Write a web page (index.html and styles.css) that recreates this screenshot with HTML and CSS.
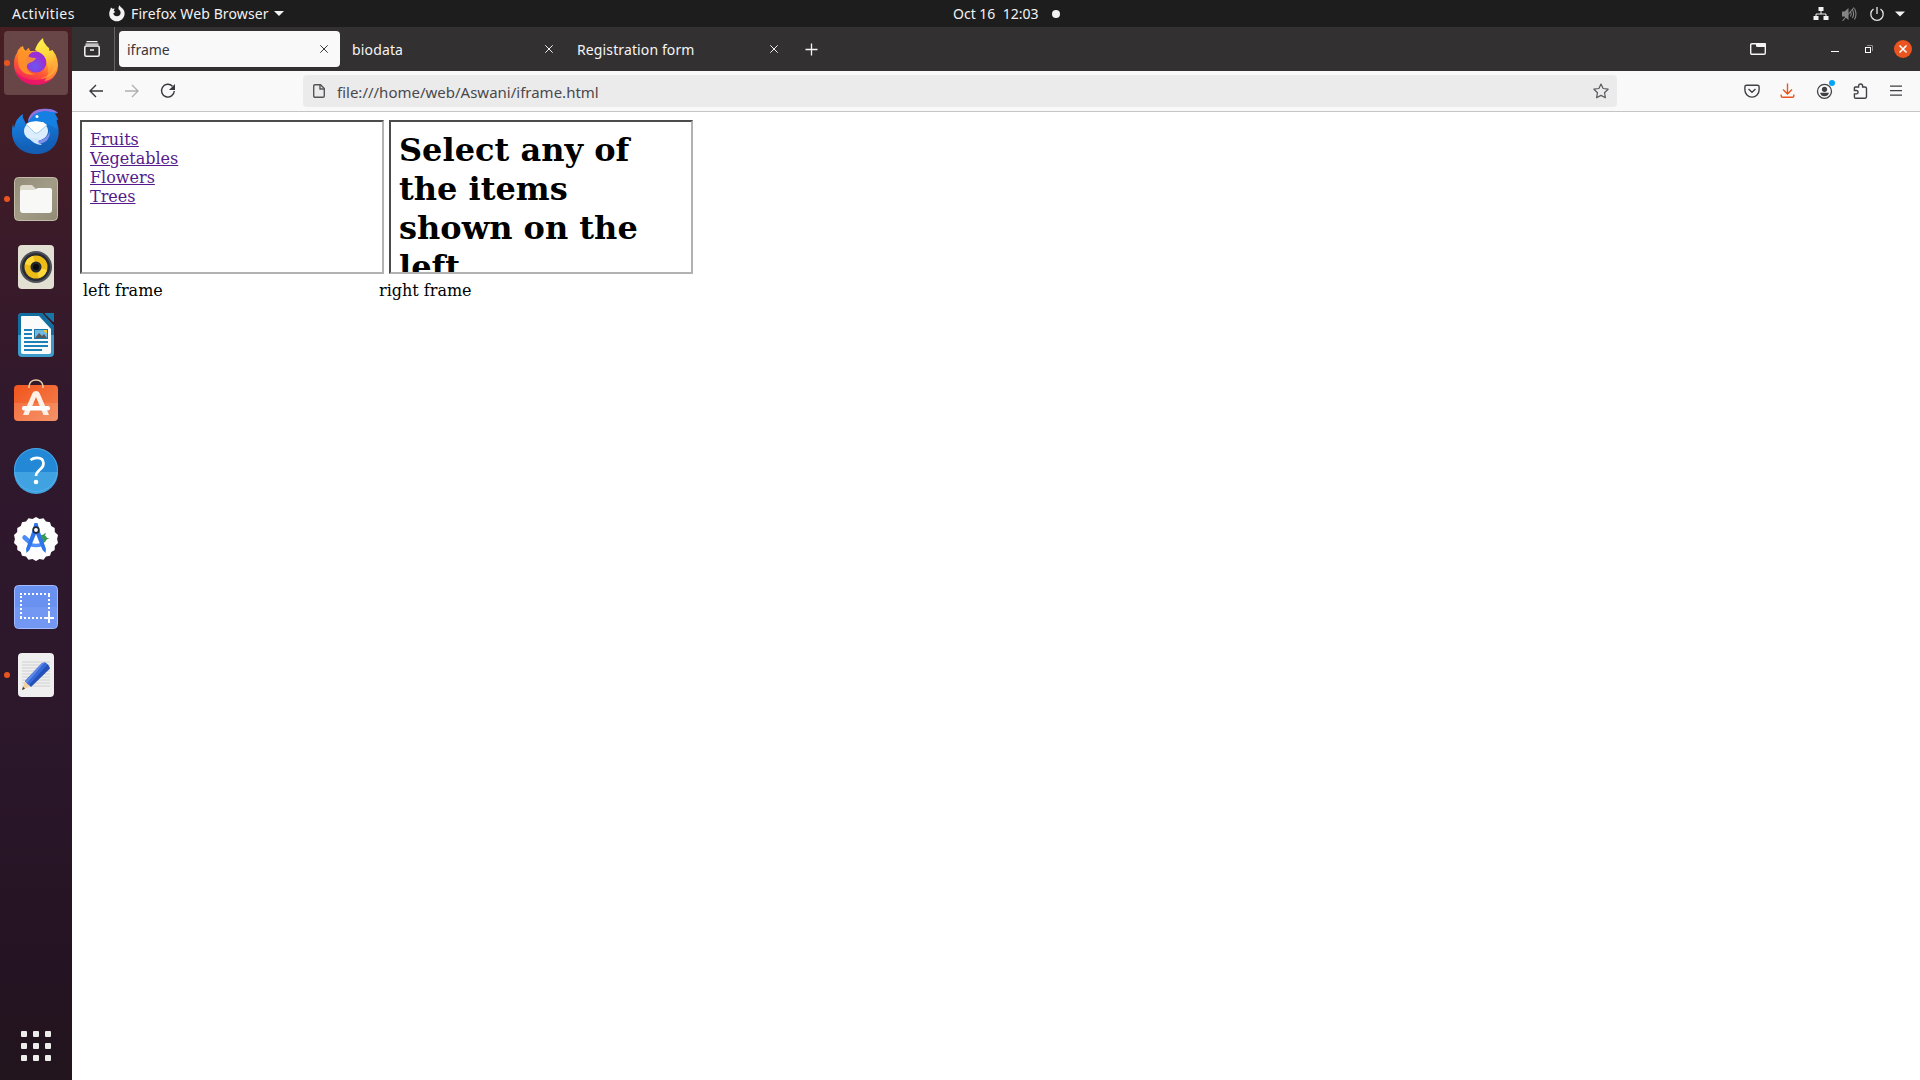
FILE: index.html
```html
<!DOCTYPE html>
<html lang="en">
<head>
<meta charset="utf-8">
<title>iframe</title>
<link rel="stylesheet" href="styles.css">
</head>
<body>
<header class="topbar">
  <div class="top-left">
    <span class="t-activities">Activities</span>
    <svg class="app-icon" width="16" height="17" viewBox="0 0 16 17"><path d="M1.2 4.800 2 2.600l1.600 1.200 2-.2L4.800 6l1.600 1-2.100 1.300c.2 2 1.700 3 3.600 3 2.200 0 3.700-1.500 3.700-3.500 0-1.700-.9-2.600-1.900-3.200C9.300 3 9.500 1.500 10.600.2c.5 1.700 1.700 2 2.900 3.300C15 5 15.800 6.800 15.600 9c-.3 4-3.600 7.300-7.700 7.300S.3 13.200.2 9c0-1.600.3-3 1-4.200Z" fill="#f2f2f2"/></svg>
    <span class="t-app">Firefox Web Browser</span>
    <svg width="10" height="5" viewBox="0 0 10 5"><path d="M0 0h10L5 5z" fill="#f2f2f2"/></svg>
  </div>
  <div class="clock"><span class="t-clock">Oct 16&nbsp; 12:03</span><i class="notify"></i></div>
  <div class="status">
    <svg width="16" height="16" viewBox="0 0 16 16"><path d="M3 10V8h10v2M8 4v4" fill="none" stroke="#f2f2f2"/><path d="M5.500 1h5v4h-5zM.5 10h5v4h-5zM10.500 10h5v4h-5z" fill="#f2f2f2"/></svg>
    <svg width="16" height="16" viewBox="0 0 16 16"><path d="M1 5.500h2.500L7.500 2v12l-4-3.500H1z" fill="#858585"/><path d="M9.500 5.500q1.500 2.500 0 5M11.500 4q2.200 4 0 8M13.500 2.500q3 5.500 0 11M1.500 15 13 1.500" fill="none" stroke="#858585" stroke-width="1.100"/></svg>
    <svg width="16" height="16" viewBox="0 0 16 16"><path d="M4.500 3A6.200 6.200 0 1 0 11.500 3M8 1v7" fill="none" stroke="#e8e8e8" stroke-width="1.300"/></svg>
    <svg width="10" height="6" viewBox="0 0 10 6"><path d="M0 .5h10l-5 5z" fill="#f2f2f2"/></svg>
  </div>
</header>
<div class="desktop">
<nav class="dock">
  <div class="slot focused running"><svg viewBox="0 1 48 48"><defs><linearGradient id="fx" x1=".85" y1="0" x2=".3" y2="1"><stop offset="0" stop-color="#ffd84a"/><stop offset=".35" stop-color="#ffa22e"/><stop offset=".65" stop-color="#ff5634"/><stop offset="1" stop-color="#f01e60"/></linearGradient><radialGradient id="fp" cx=".45" cy=".7"><stop offset="0" stop-color="#6b58f2"/><stop offset="1" stop-color="#9a2fd4"/></radialGradient><linearGradient id="fy" x1="0" y1="0" x2=".2" y2="1"><stop offset="0" stop-color="#fff450"/><stop offset=".45" stop-color="#ffd83c"/><stop offset="1" stop-color="#ff8034"/></linearGradient></defs><path d="M5 15q0-3 3-5l3-2q0 3 3 5 2-3 3-3 0 2 1 3h19q6 4 8 11c2 13-7 22.500-21 22.500C11 46.500 2 38 2 26q0-7 3-11Z" fill="url(#fx)"/><path d="M3.500 33q7 9 20.500 9 14 0 21-11-4 16-21 16Q8.500 47 3.500 33Z" fill="#e80f6d" opacity=".75"/><circle cx="24" cy="24" r="10.500" fill="url(#fp)"/><path d="M23 12q2-7 8-12 0 5 6 10l.5 3 3-1q7 9 5 20-3 10-13 11 6-8 2.500-17-1-7-5-10-3-2-7-4Z" fill="url(#fy)"/><path d="M42 17q3 20-15 24 14-1 18-11 1-7-3-13Z" fill="#ffb03a" opacity=".6"/><path d="M9 8q0 4 4 6 2-3 4-4 0 3 2 5-3 2-2 4 4 1 7 1-1 3-7 5-3 2-2 6 3 5 9 5-12 3-17-7Q4 18 9 8Z" fill="#ff9228" opacity=".9"/></svg></div>
  <div class="slot"><svg viewBox="0 -1 48 48"><defs><linearGradient id="tb" x1=".3" y1="0" x2=".5" y2="1"><stop offset="0" stop-color="#1b8af0"/><stop offset="1" stop-color="#1058ac"/></linearGradient></defs><path d="M16 14C17 5 24 1 32 1q8-1 14 4l-4 1q4 3 4 6-1 0-2 0c6 12 3 34-20 34C9 46 0 36 0 24q0-5 1-8l1 4q2-10 9-14-1 3 1 6 3 4 1 7Z" fill="url(#tb)"/><path d="M16 13C18 4 25 0 35 1q7 0 11 4-8-2-14-1-8 3-16 9Z" fill="#9470dc"/><path d="M16 16Q20 4 32 3q8 0 12 4 1 7 1 14-10-8-29-5Z" fill="#1680e2"/><ellipse cx="24" cy="23" rx="12" ry="10" fill="#dceefd"/><path d="M17 30q5 7 13 7-4-3-3-7Z" fill="#cfe6fb"/><path d="m14 16 9 9q2 1 4-1l8-7-4-3H18z" fill="#fff"/><path d="m14 16 9 9q2 1 4-1l8-7" fill="none" stroke="#9ccbee"/><path d="M26 33q9-2 12-10 0 11-10 13-2-1-2-3Z" fill="#7f8ee9"/><circle cx="25" cy="8.500" r="1.500" fill="#fff"/><path d="M2 30q7 12 22 11 13 0 20-12-4 17-20 17Q7 45 2 30Z" fill="#155fb5" opacity=".7"/></svg></div>
  <div class="slot running"><svg viewBox="0 0 48 48"><defs><linearGradient id="fl" x2="1" y2="1"><stop stop-color="#918b78"/><stop offset=".5" stop-color="#a29c87"/><stop offset="1" stop-color="#928b76"/></linearGradient></defs><rect x="2.500" y="2.500" width="43" height="43" rx="4" fill="url(#fl)" stroke="#c2bca8"/><path d="M8 13q0-3 3-3h9l4 4h10v8H8z" fill="#dedace"/><path d="M8 17q0-2 2-2h12l4-2h12q2 0 2 2v20q0 3-3 3H11q-3 0-3-3z" fill="#f8f8f6"/></svg></div>
  <div class="slot"><svg viewBox="0 0 48 48"><rect x="6" y="2" width="36" height="44" rx="4" fill="#e2dfd3"/><circle cx="24" cy="24" r="16" fill="#4f5259"/><circle cx="24" cy="24" r="14" fill="#292c32"/><circle cx="24" cy="24" r="11.500" fill="#eebc16"/><path d="M24 24 13 21a11.500 11.500 0 0 1 8-8zM24 24l11 3a11.500 11.500 0 0 1-8 8z" fill="#ffd83b"/><circle cx="24" cy="24" r="5.500" fill="#26282c"/><circle cx="24" cy="24" r="3" fill="#0c0c0e"/></svg></div>
  <div class="slot"><svg viewBox="0 0 48 48"><path d="M10 2h20l12 13v27q0 4-4 4H10q-4 0-4-4V6q0-4 4-4Z" fill="#3c9bcb"/><path d="M10 2h20l12 13v9H6V6q0-4 4-4Z" fill="#126e9f"/><path d="M33 2h9v9q-1 0-2-1l-7-7q-1-1 0-1Z" fill="#1477a8"/><path d="M10 5h17l12 13v23q0 2-2 2H11q-2 0-2-2V6q0-1 1-1Z" fill="#fbfbfb"/><path d="M12 19h8M12 23h8M12 27h8M12 31h24M12 35h24M12 39h18" stroke="#1c81b5" stroke-width="2"/><rect x="22.500" y="18.500" width="13" height="9" fill="#70b9e2" stroke="#1b79aa"/><path d="m23 27 4-5 3 3 2-2 3 4z" fill="#56595a"/><path d="M32 19h3v3q-3 0-3-3Z" fill="#f7c727"/></svg></div>
  <div class="slot"><svg viewBox="0 0 48 48"><defs><linearGradient id="sw" x2="1" y2="1"><stop stop-color="#f1541c"/><stop offset="1" stop-color="#f48553"/></linearGradient></defs><rect x="2" y="6" width="44" height="36" rx="4" fill="url(#sw)"/><path d="M2 24h44v14q0 4-4 4H6q-4 0-4-4z" fill="#fff" opacity=".12"/><path d="M17 9V7q1-6 7-6t7 6v2" fill="none" stroke="#e9cfa6" stroke-width="1.500"/><path d="m11 36 9.500-22q1-2 3.500-2t3.500 2L37 36h-5.500L24 18l-7.500 18z" fill="#fff1e8"/><rect x="10" y="27" width="28" height="4.500" rx="2" fill="#fff"/></svg></div>
  <div class="slot"><svg viewBox="0 1 48 48"><circle cx="24" cy="24" r="22" fill="#2388d6"/><path d="M2 26h44a22 22 0 0 1-44 0Z" fill="#41a2e1"/><circle cx="24" cy="24" r="21.500" fill="none" stroke="#58b3ec" opacity=".7"/><path d="M18.500 14q3-2.200 6.500-2.200 6.500 0 6.500 5.700 0 3.500-4 6.500-3.500 3-3.500 6" fill="none" stroke="#fff" stroke-width="2.700"/><circle cx="24" cy="36" r="2.300" fill="#fff"/></svg></div>
  <div class="slot"><svg viewBox="0 0 48 48"><path d="m24 2 3.500 2 4-.8 2.500 3.300 4 .8 1.200 3.800 3.500 2 .1 4L46 20l-.9 4 .9 4-3.200 2.900-.1 4-3.500 2-1.200 3.800-4 .8-2.500 3.300-4-.8L24 46l-3.500-2-4 .8-2.500-3.300-4-.8-1.200-3.800-3.500-2-.1-4L2 28l.9-4L2 20l3.200-2.900.1-4 3.500-2L10 7.300l4-.8 2.500-3.300 4 .8z" fill="#fff"/><path d="M29 20q4-1 6 3-1 5-5 5z" fill="#3a9b55"/><path d="m31 21 2.500-2.500M33 24l3.500-.5" stroke="#30894a" stroke-width="1.200"/><path d="m12.500 22.500 5 4.500" stroke="#4b8cf8" stroke-width="4.500" stroke-linecap="round"/><path d="M18 29.500q6 2 12 0" fill="none" stroke="#4f90fb" stroke-width="3.500"/><path d="M22.500 8h3l2.500 9 6 17-.5 4-3-3L24 19l-6.500 16-3 3-.5-4 6-17z" fill="#2f75e9"/><circle cx="24" cy="15" r="2.800" fill="#fff" stroke="#202735" stroke-width="1.700"/></svg></div>
  <div class="slot"><svg viewBox="0 0 48 48"><rect x="2.500" y="2.500" width="43" height="43" rx="4" fill="#6891f0" stroke="#a3bcff"/><path d="M3 24h42v17q0 4-4 4H7q-4 0-4-4z" fill="#789bf5" opacity=".7"/><path d="M8 11h30M37 12v20M9 13v24M8 35h26" fill="none" stroke="#fff" stroke-width="2" stroke-dasharray="2 2"/><path d="M37 30v10M32 35h10" stroke="#fff" stroke-width="2"/></svg></div>
  <div class="slot running"><svg viewBox="0 0 48 48"><rect x="6" y="2" width="36" height="44" rx="4" fill="#efefef"/><path d="M10 11h28M10 14h28M10 17h28M10 20h28M10 23h28M10 26h28M10 29h28M10 32h28M10 35h28" stroke="#c9c9c9" stroke-width=".8"/><path d="m10 39 3-9 5 5.500z" fill="#f2d1a1"/><path d="m10 39 1-3.200 2 2z" fill="#333"/><path d="m13 30 17-18 3-.5q4 2 5 6L19 36z" fill="#2450b8"/><path d="m13 30 17-18 3-.5L15 32.500z" fill="#5c88e8"/><path d="m15 32.500 18-21 2.500 2L17 34z" fill="#376bd9"/></svg></div>
  <div class="slot apps"><svg viewBox="0 0 48 48"><g fill="#ededeb"><rect x="9" y="9" width="6" height="6" rx="1"/><rect x="21" y="9" width="6" height="6" rx="1"/><rect x="33" y="9" width="6" height="6" rx="1"/><rect x="9" y="21" width="6" height="6" rx="1"/><rect x="21" y="21" width="6" height="6" rx="1"/><rect x="33" y="21" width="6" height="6" rx="1"/><rect x="9" y="33" width="6" height="6" rx="1"/><rect x="21" y="33" width="6" height="6" rx="1"/><rect x="33" y="33" width="6" height="6" rx="1"/></g></svg></div>
</nav>
<main class="browser">
  <div class="tabbar">
    <div class="recent"><svg width="16" height="16" viewBox="0 0 16 16"><path d="M2.500.7h11M1.500 3.200h13" stroke="#f5f5f5" stroke-width="1.200" fill="none"/><rect x=".8" y="5" width="14.400" height="10.200" rx="1.500" fill="none" stroke="#f5f5f5" stroke-width="1.500"/><path d="M6 9h4" stroke="#f5f5f5" stroke-width="1.500"/></svg></div>
    <div class="tab active"><span>iframe</span><svg width="8" height="8" viewBox="0 0 8 8"><path d="m.3.300 7.400 7.400m0-7.400L.3 7.700"/></svg></div>
    <div class="tab"><span class="t-tab2">biodata</span><svg width="8" height="8" viewBox="0 0 8 8"><path d="m.3.300 7.400 7.400m0-7.400L.3 7.700"/></svg></div>
    <div class="tab"><span class="t-tab3">Registration form</span><svg width="8" height="8" viewBox="0 0 8 8"><path d="m.3.300 7.400 7.400m0-7.400L.3 7.700"/></svg></div>
    <svg class="plus" width="13" height="13" viewBox="0 0 13 13"><path d="M6.500.5v12M.5 6.500h12" stroke="#f5f5f5" stroke-width="1.300"/></svg>
    <div class="window-buttons">
      <svg width="16" height="12" viewBox="0 0 16 12"><rect x=".7" y=".7" width="14.600" height="10.600" rx="1.200" fill="none" stroke="#f5f5f5" stroke-width="1.400"/><path d="M6 0h9q1 0 1 1v3H7.500Q6 4 6 2.500z" fill="#f5f5f5"/></svg>
      <svg class="min" width="8" height="6" viewBox="0 0 8 6"><path d="M0 5.500h8" stroke="#fff"/></svg>
      <svg class="restore" width="8" height="8" viewBox="0 0 8 8"><path d="M2 .5h5.500V6" fill="none" stroke="#8b898a"/><rect x=".5" y="2.500" width="5" height="5" fill="none" stroke="#fff"/></svg>
      <svg class="close" width="18" height="18" viewBox="0 0 18 18"><circle cx="9" cy="9" r="9" fill="#e95420"/><path d="m5.500 5.500 7 7m0-7-7 7" stroke="#fff" stroke-width="1.600"/></svg>
    </div>
  </div>
  <div class="toolbar">
    <div class="nav-buttons">
      <svg width="16" height="16" viewBox="0 0 16 16"><path d="M15 8H2m6-6L2 8l6 6" fill="none" stroke="#38383d" stroke-width="1.400"/></svg>
      <svg width="16" height="16" viewBox="0 0 16 16"><path d="M1 8h13M8 2l6 6-6 6" fill="none" stroke="#b0b0b2" stroke-width="1.400"/></svg>
      <svg width="16" height="16" viewBox="0 0 16 16"><path d="M12.500 3.200A6.400 6.400 0 1 0 14.300 8" fill="none" stroke="#38383d" stroke-width="1.400"/><path d="M15 1v6H9z" fill="#38383d"/></svg>
    </div>
    <div class="urlbar">
      <svg width="12" height="14" viewBox="0 0 12 14"><path d="M2 .7h5.500l3.800 3.800V12q0 1.300-1.300 1.300H2Q.7 13.300.7 12V2Q.7.700 2 .7Z" fill="none" stroke="#555559" stroke-width="1.400"/><path d="M7 1v4h4" fill="none" stroke="#555559" stroke-width="1.400"/></svg>
      <span class="t-url">file:///home/web/Aswani/iframe.html</span>
      <svg class="star" width="16" height="16" viewBox="0 0 16 16"><path d="m8 1 2.100 4.500 5 .7-3.600 3.500.9 5L8 12.400l-4.400 2.300.9-5L.9 6.200l5-.7z" fill="none" stroke="#5a5a60" stroke-width="1.200" stroke-linejoin="round"/></svg>
    </div>
    <div class="tools">
      <svg width="16" height="16" viewBox="0 0 16 16"><path d="M2.500 2.200h11q1.600 0 1.600 1.600V7a7.100 7.100 0 0 1-14.200 0V3.800q0-1.600 1.600-1.600Z" fill="none" stroke="#404045" stroke-width="1.400"/><path d="M4.500 6 8 9.300 11.500 6" fill="none" stroke="#404045" stroke-width="1.400"/></svg>
      <svg width="16" height="16" viewBox="0 0 16 16"><path d="M7.500.5v10M3 6.500 7.500 11 12 6.500M1.200 11.500V13q0 1.300 1.300 1.300h10q1.300 0 1.300-1.300v-1.500" fill="none" stroke="#e95420" stroke-width="1.400"/></svg>
      <div class="account"><svg width="16" height="16" viewBox="0 0 16 16"><circle cx="8.500" cy="8.300" r="7" fill="none" stroke="#404045" stroke-width="1.300"/><circle cx="8.500" cy="6.300" r="2.600" fill="#404045"/><path d="M4 9.800h9q-1 3.500-4.500 3.500T4 9.800Z" fill="#404045"/></svg><i></i></div>
      <svg width="16" height="16" viewBox="0 0 16 16"><path d="M2.400 7.500V5q0-1 1-1h3.200V3a2 2 0 0 1 4 0v1h2.100q1.800 0 1.800 1.500v8.300q0 1.400-1.400 1.400H3.700q-1.300 0-1.300-1.300v-3h2a1.700 1.700 0 0 0 0-3.400z" fill="none" stroke="#404045" stroke-width="1.400"/></svg>
      <svg width="16" height="16" viewBox="0 0 16 16"><path d="M2 3.200h12M2 7.700h12M2 12.200h12" stroke="#404045" stroke-width="1.300"/></svg>
    </div>
  </div>
  <section class="page">
    <div class="frames">
      <div class="frame"><a href="#">Fruits</a><a href="#">Vegetables</a><a href="#">Flowers</a><a href="#">Trees</a></div>
      <div class="frame"><h1>Select any of<br>the items<br>shown on the<br>left</h1></div>
    </div>
    <div class="captions"><span>left frame</span><span>right frame</span></div>
  </section>
</main>
</div>
</body>
</html>
```
FILE: styles.css
```css
* { box-sizing: border-box; }
body {
  margin: 0;
  width: 1920px;
  height: 1080px;
  overflow: hidden;
  display: flex;
  flex-direction: column;
  font: 14px/20px "Noto Sans", sans-serif;
  background: #fff;
}
svg { display: block; flex: none; overflow: visible; }
span { white-space: nowrap; }

.topbar {
  height: 27px;
  flex: none;
  display: grid;
  grid-template-columns: 953px 1fr auto;
  align-items: center;
  background: #1d1d1d;
  color: #f2f2f2;
}
.top-left { display: flex; align-items: center; padding-left: 12px; }
.t-activities { width: 97px; letter-spacing: .45px; }
.t-app { width: 143px; margin-left: 6px; letter-spacing: .12px; }
.clock { display: flex; align-items: center; }
.t-clock { width: 99px; }
.notify { width: 8px; height: 8px; border-radius: 50%; background: #f2f2f2; }
.status { display: flex; align-items: center; gap: 12px; padding-right: 15px; }
.status svg:last-child { margin-left: -2px; }

.desktop { flex: 1; display: flex; min-height: 0; }
.dock {
  width: 72px;
  flex: none;
  display: flex;
  flex-direction: column;
  gap: 4px;
  padding: 4px 4px 2px;
  background: linear-gradient(#471e22, #3c1b28 18%, #30182d 38%, #2c172b 65%, #241322 90%, #22151d);
}
.slot {
  position: relative;
  height: 64px;
  flex: none;
  padding: 8px;
  border-radius: 4px;
}
.slot svg { width: 48px; height: 48px; }
.focused { background: #684648; }
.running::before {
  content: "";
  position: absolute;
  left: 0;
  top: 29px;
  width: 6px;
  height: 6px;
  border-radius: 50%;
  background: #e95420;
}
.apps { margin-top: auto; }

.browser { flex: 1; display: flex; flex-direction: column; }
.tabbar {
  height: 44px;
  flex: none;
  display: flex;
  align-items: center;
  background: #333031;
  color: #f5f5f5;
}
.recent {
  width: 43px;
  height: 44px;
  display: flex;
  align-items: center;
  padding-left: 12px;
  border-right: 1px solid #666465;
}
.tab {
  width: 221px;
  height: 36px;
  margin-left: 4px;
  display: flex;
  align-items: center;
  justify-content: space-between;
  padding: 0 12px 0 8px;
  border-radius: 4px;
}
.tab span { padding-top: 2px; }
.t-tab2 { letter-spacing: .15px; }
.t-tab3 { letter-spacing: .12px; }
.tab svg { stroke: #f0f0f0; stroke-width: 1; }
.tab.active { background: #f9f9f9; color: #38383d; }
.tab.active svg { stroke: #38383d; }
.plus { margin-left: 15px; }
.window-buttons { display: flex; align-items: center; margin-left: auto; padding-right: 8px; }
.min { margin-left: 65px; }
.restore { margin-left: 26px; }
.close { margin-left: 21px; }

.toolbar {
  height: 41px;
  flex: none;
  display: flex;
  align-items: center;
  background: #f9f9f9;
  border-bottom: 1px solid #c5c5c5;
}
.nav-buttons { width: 231px; display: flex; gap: 20px; padding-left: 16px; }
.urlbar {
  width: 1314px;
  height: 32px;
  display: flex;
  align-items: center;
  padding: 0 8px 0 10px;
  border-radius: 4px;
  background: #ebebeb;
  color: #49494d;
}
.t-url { margin-left: 12px; padding-top: 1px; font-size: 15px; }
.star { margin-left: auto; }
.tools { display: flex; gap: 20px; margin-left: auto; padding-right: 16px; }
.account { position: relative; }
.account i {
  position: absolute;
  right: -3px;
  top: -3px;
  width: 6px;
  height: 6px;
  border-radius: 50%;
  background: #00a5f5;
}

.page { flex: 1; padding: 8px; font: 16px/19px "DejaVu Serif", serif; color: #000; }
.frames { display: flex; gap: 5px; }
.frame {
  width: 304px;
  height: 154px;
  padding: 8px;
  overflow: hidden;
  border: 2px solid;
  border-color: #4c4c4c #b2b2b2 #b2b2b2 #4c4c4c;
}
.frame a { display: block; width: max-content; color: #551a8b; }
.frame h1 { margin: 1px 0 0; font-size: 32px; line-height: 39px; white-space: nowrap; }
.captions { display: flex; padding: 7px 3px; }
.captions span:first-child { width: 296px; }
```
